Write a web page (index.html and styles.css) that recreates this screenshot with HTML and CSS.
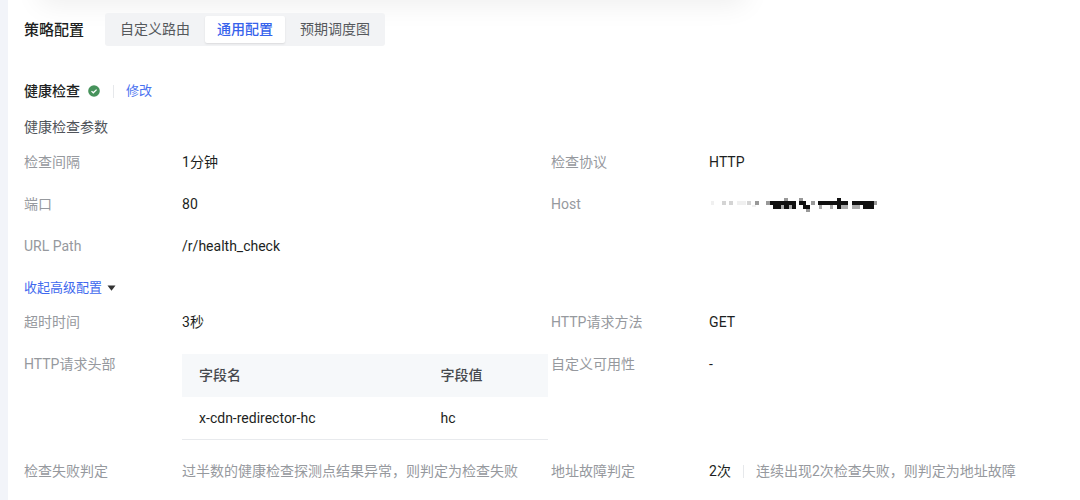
FILE: index.html
```html
<!DOCTYPE html>
<html lang="zh-CN">
<head>
<meta charset="utf-8">
<meta name="viewport" content="width=device-width, initial-scale=1">
<title>策略配置</title>
<link rel="stylesheet" href="styles.css">
</head>
<body>
<main class="panel">
  <header class="panel-header">
    <h1 class="panel-title">策略配置</h1>
    <div class="tabs" role="tablist">
      <button class="tab" type="button" role="tab" aria-selected="false">自定义路由</button>
      <button class="tab tab-active" type="button" role="tab" aria-selected="true">通用配置</button>
      <button class="tab" type="button" role="tab" aria-selected="false">预期调度图</button>
    </div>
  </header>

  <section class="section">
    <div class="section-header">
      <h2 class="section-title">健康检查</h2>
      <svg class="status" viewBox="0 0 12 12" role="img" aria-label="正常"><circle cx="6" cy="6" r="5.8" fill="#46925b"/><path d="M3.5 6.1 5.3 7.8 8.6 4.6" fill="none" stroke="#fff" stroke-width="1.3"/></svg>
      <span class="divider"></span>
      <a class="link" href="#edit">修改</a>
    </div>
    <h3 class="subtitle">健康检查参数</h3>

    <dl class="fields">
      <div class="field"><dt>检查间隔</dt><dd>1分钟</dd></div>
      <div class="field"><dt>检查协议</dt><dd>HTTP</dd></div>
      <div class="field"><dt>端口</dt><dd>80</dd></div>
      <div class="field"><dt>Host</dt><dd>
        <svg class="mask" viewBox="0 0 170 16" aria-hidden="true" shape-rendering="crispEdges">
          <path fill="#f0f0f0" d="M2 4h3v4H2zM28 4h9v4h-9zM43 8h4v2h-4z"/>
          <path fill="#d4d4d4" d="M13 4h4v4h-4zM20 4h4v4h-4zM38 4h4v4h-4z"/>
          <path fill="#999" d="M46 4h4v4h-4zM57 4h4v4h-4zM75 1h4v3h-4zM90 1h4v3h-4zM102 4h4v4h-4zM165 4h3v4h-3zM97 12h4v3h-4z"/>
          <path fill="#111" d="M61 4h26v4H61zM64 8h23v4H64zM90 4h7v4h-7zM94 8h7v4h-7zM109 4h30v4h-30zM128 1h4v11h-4zM143 4h22v4h-22zM154 8h11v4h-11z"/>
          <path fill="#aaa" d="M72 8h3v4h-3zM80 8h3v4h-3zM110 8h3v4h-3zM121 8h3v4h-3zM132 8h7v4h-7zM143 8h8v4h-8z"/>
        </svg>
      </dd></div>
      <div class="field"><dt>URL Path</dt><dd>/r/health_check</dd></div>
    </dl>

    <button class="toggle" type="button" aria-expanded="true">收起高级配置
      <svg class="caret" viewBox="0 0 8 6" aria-hidden="true"><path d="M0 .5h8L4 5.7z" fill="#333"/></svg>
    </button>

    <dl class="fields">
      <div class="field"><dt>超时时间</dt><dd>3秒</dd></div>
      <div class="field"><dt>HTTP请求方法</dt><dd>GET</dd></div>
      <div class="field"><dt>HTTP请求头部</dt><dd>
        <table class="headers">
          <thead><tr><th scope="col">字段名</th><th scope="col">字段值</th></tr></thead>
          <tbody><tr><td>x-cdn-redirector-hc</td><td>hc</td></tr></tbody>
        </table>
      </dd></div>
      <div class="field"><dt>自定义可用性</dt><dd>-</dd></div>
      <div class="field"><dt>检查失败判定</dt><dd class="note">过半数的健康检查探测点结果异常，则判定为检查失败</dd></div>
      <div class="field"><dt>地址故障判定</dt><dd class="inline"><span>2次</span><span class="divider"></span><span class="note">连续出现2次检查失败，则判定为地址故障</span></dd></div>
    </dl>
  </section>
</main>
</body>
</html>
```
FILE: styles.css
```css
* {
  box-sizing: border-box;
}

body {
  margin: 0;
  padding-left: 8px;
  background: #f2f4f9;
  color: #1d1f22;
  font: 14px/22px Roboto, "Noto Sans CJK SC", sans-serif;
}

h1, h2, h3, dl, dd {
  margin: 0;
}

button {
  border: 0;
  font: inherit;
  cursor: pointer;
}

.panel {
  position: relative;
  min-height: 100vh;
  padding: 13px 2px 16px 16px;
  background: #fff;
  overflow: hidden;
}

/* Shadow cast by the card above the panel */
.panel::before {
  content: "";
  position: absolute;
  top: -40px;
  left: 36px;
  width: 65%;
  height: 40px;
  box-shadow: 0 0 28px 4px rgba(0, 0, 0, 0.07);
}

.panel-header {
  position: relative;
  display: flex;
  align-items: center;
  gap: 21px;
}

.panel-title {
  font-size: 15px;
  font-weight: 500;
}

.tabs {
  display: flex;
  gap: 3px;
  padding: 3px;
  border-radius: 3px;
  background: #f2f3f5;
}

.tab {
  padding: 3px 12px;
  border-radius: 2px;
  background: transparent;
  color: #55585c;
  line-height: 21px;
}

.tab-active {
  background: #fff;
  box-shadow: 0 1px 2px rgba(0, 0, 0, 0.1);
  color: #3662ec;
  font-weight: 500;
}

.section {
  padding-top: 34px;
}

.section-header {
  display: flex;
  align-items: center;
}

.section-title {
  font-size: 14px;
  font-weight: 500;
}

.status {
  width: 12px;
  height: 12px;
  margin: 0 13px 0 8px;
}

.divider {
  width: 1px;
  height: 13px;
  margin-right: 12px;
  background: #e6e8eb;
}

.link {
  color: #4a72f0;
  font-size: 13px;
  text-decoration: none;
}

.subtitle {
  margin: 14px 0 13px;
  color: #50545a;
  font-size: 14px;
  font-weight: 400;
}

.fields {
  display: grid;
  grid-template-columns: 1fr 1fr;
  row-gap: 20px;
}

.field {
  display: grid;
  grid-template-columns: 30% 1fr;
}

.field dt,
.note {
  color: #96999e;
}

.inline {
  display: flex;
  align-items: center;
}

.inline .divider {
  margin: 0 12px;
}

.mask {
  display: block;
  width: 170px;
  height: 16px;
  margin-top: 4px;
}

.toggle {
  display: flex;
  align-items: center;
  gap: 5px;
  margin: 20px 0 12px;
  padding: 0;
  background: none;
  color: #4069ee;
  font-size: 13px;
}

.caret {
  width: 9px;
  height: 6px;
}

.headers {
  width: calc(100% - 3px);
  margin-top: 1px;
  border-collapse: collapse;
  table-layout: fixed;
}

.headers th,
.headers td {
  padding: 10px 17px;
  text-align: left;
}

.headers th {
  background: #f6f8fa;
  color: #46494e;
  font-weight: 500;
  line-height: 23px;
}

.headers th:first-child {
  width: 66%;
}

.headers td {
  border-bottom: 1px solid #e8eaed;
}
```
